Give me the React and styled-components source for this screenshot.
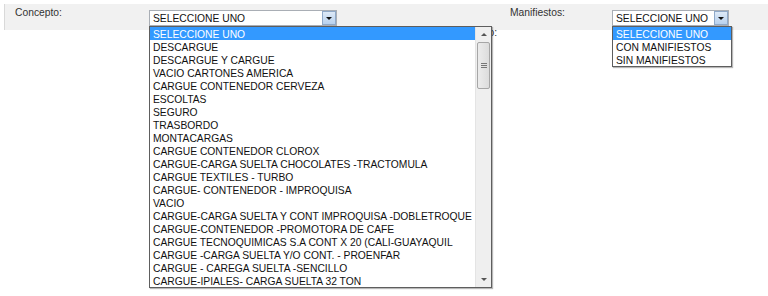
import React from 'react';
import styled, { createGlobalStyle } from 'styled-components';

const GlobalStyle = createGlobalStyle`
  html, body {
    margin: 0;
    padding: 0;
    background: #ffffff;
  }
  body {
    font-family: "Liberation Sans", Arial, sans-serif;
    font-size: 10.3px;
    color: #222;
  }
`;

const CONCEPTOS = [
  'SELECCIONE UNO',
  'DESCARGUE',
  'DESCARGUE Y CARGUE',
  'VACIO CARTONES AMERICA',
  'CARGUE CONTENEDOR CERVEZA',
  'ESCOLTAS',
  'SEGURO',
  'TRASBORDO',
  'MONTACARGAS',
  'CARGUE CONTENEDOR CLOROX',
  'CARGUE-CARGA SUELTA CHOCOLATES -TRACTOMULA',
  'CARGUE TEXTILES - TURBO',
  'CARGUE- CONTENEDOR - IMPROQUISA',
  'VACIO',
  'CARGUE-CARGA SUELTA Y CONT IMPROQUISA -DOBLETROQUE',
  'CARGUE-CONTENEDOR -PROMOTORA DE CAFE',
  'CARGUE TECNOQUIMICAS S.A CONT X 20 (CALI-GUAYAQUIL',
  'CARGUE -CARGA SUELTA Y/O CONT. - PROENFAR',
  'CARGUE - CAREGA SUELTA -SENCILLO',
  'CARGUE-IPIALES- CARGA SUELTA 32 TON',
];

const MANIFIESTOS = ['SELECCIONE UNO', 'CON MANIFIESTOS', 'SIN MANIFIESTOS'];

const Page = styled.div`
  min-height: 296px;
  box-sizing: border-box;
  padding: 4px 0 0 4px;
`;

const Band = styled.div`
  display: flex;
  align-items: flex-start;
  height: 26px;
  padding: 3px 0 0 10px;
  box-sizing: border-box;
  background: #f1f1f1;
  border-left: 1px solid #d9d9d9;
`;

const Label = styled.div`
  flex: none;
  width: ${(p) => p.$width}px;
  margin-left: ${(p) => p.$offset || 0}px;
  line-height: 12px;
  color: #333;
`;

const Combo = styled.div`
  position: relative;
  flex: none;
  width: ${(p) => p.$width}px;
  margin-top: 3px;
  z-index: ${(p) => (p.$open ? 5 : 1)};
`;

const SelectBox = styled.div`
  display: flex;
  align-items: center;
  height: 16px;
  box-sizing: border-box;
  border: 1px solid #a9aeb5;
  background: #fff;
`;

const SelectText = styled.span`
  flex: 1;
  padding: 2px 0 0 3px;
  line-height: 12px;
  color: #111;
  white-space: nowrap;
  overflow: hidden;
`;

const ArrowButton = styled.div`
  flex: none;
  display: flex;
  align-items: center;
  justify-content: center;
  width: 14px;
  height: 14px;
  box-sizing: border-box;
  border: 1px solid #8fa9c9;
  background: linear-gradient(#dde9f7, #b8d1ee);
`;

const Triangle = styled.span`
  width: 0;
  height: 0;
  border-left: 3px solid transparent;
  border-right: 3px solid transparent;
  border-top: 3px solid #111;
  margin-top: 1px;
`;

const DropList = styled.div`
  position: absolute;
  top: 16px;
  left: 0;
  display: flex;
  width: ${(p) => p.$width}px;
  box-sizing: border-box;
  border: 1px solid #5e5e5e;
  background: #fff;
  box-shadow: 1px 1px 1px rgba(0, 0, 0, 0.28);
`;

const Options = styled.div`
  flex: 1;
  min-width: 0;
`;

const Option = styled.div`
  height: 13px;
  box-sizing: border-box;
  padding: 1px 0 0 3px;
  line-height: 13px;
  white-space: nowrap;
  overflow: hidden;
  color: ${(p) => (p.$selected ? '#fff' : '#111')};
  background: ${(p) => (p.$selected ? '#3399ff' : 'transparent')};
`;

const ScrollTrack = styled.div`
  flex: none;
  display: flex;
  flex-direction: column;
  width: 15px;
  background: #efefef;
  border-left: 1px solid #e4e4e4;
`;

const ScrollArrow = styled.div`
  display: flex;
  align-items: center;
  justify-content: center;
  height: 15px;
`;

const SmallTri = styled.span`
  width: 0;
  height: 0;
  border-left: 3px solid transparent;
  border-right: 3px solid transparent;
  ${(p) => (p.$up ? 'border-bottom: 3px solid #555;' : 'border-top: 3px solid #555;')}
`;

const Thumb = styled.div`
  display: flex;
  flex-direction: column;
  align-items: center;
  justify-content: center;
  gap: 1px;
  height: 47px;
  margin: 0 1px;
  box-sizing: border-box;
  border: 1px solid #a6a6a6;
  border-radius: 2px;
  background: linear-gradient(90deg, #ececec, #dcdcdc);
`;

const Grip = styled.span`
  width: 6px;
  height: 1px;
  background: #777;
`;

const TrackFill = styled.div`
  flex: 1;
`;

const Below = styled.div`
  display: flex;
  margin-top: -3px;
  line-height: 12px;
`;

const BelowLabel = styled.div`
  width: 493px;
  text-align: right;
  color: #333;
`;

const Scrollbar = () => (
  <ScrollTrack>
    <ScrollArrow><SmallTri $up /></ScrollArrow>
    <Thumb>
      <Grip />
      <Grip />
      <Grip />
    </Thumb>
    <TrackFill />
    <ScrollArrow><SmallTri /></ScrollArrow>
  </ScrollTrack>
);

const Select = ({ width, listWidth, options, scroll }) => (
  <Combo $width={width} $open>
    <SelectBox>
      <SelectText>{options[0]}</SelectText>
      <ArrowButton><Triangle /></ArrowButton>
    </SelectBox>
    <DropList $width={listWidth}>
      <Options>
        {options.map((o, i) => (
          <Option key={o} $selected={i === 0}>{o}</Option>
        ))}
      </Options>
      {scroll && <Scrollbar />}
    </DropList>
  </Combo>
);

export default function App() {
  return (
    <Page>
      <GlobalStyle />
      <Band>
        <Label $width={134}>Concepto:</Label>
        <Select width={188} listWidth={343} options={CONCEPTOS} scroll />
        <Label $width={102} $offset={173}>Manifiestos:</Label>
        <Select width={117} listWidth={120} options={MANIFIESTOS} />
      </Band>
      <Below>
        <BelowLabel>Tipo:</BelowLabel>
      </Below>
    </Page>
  );
}
